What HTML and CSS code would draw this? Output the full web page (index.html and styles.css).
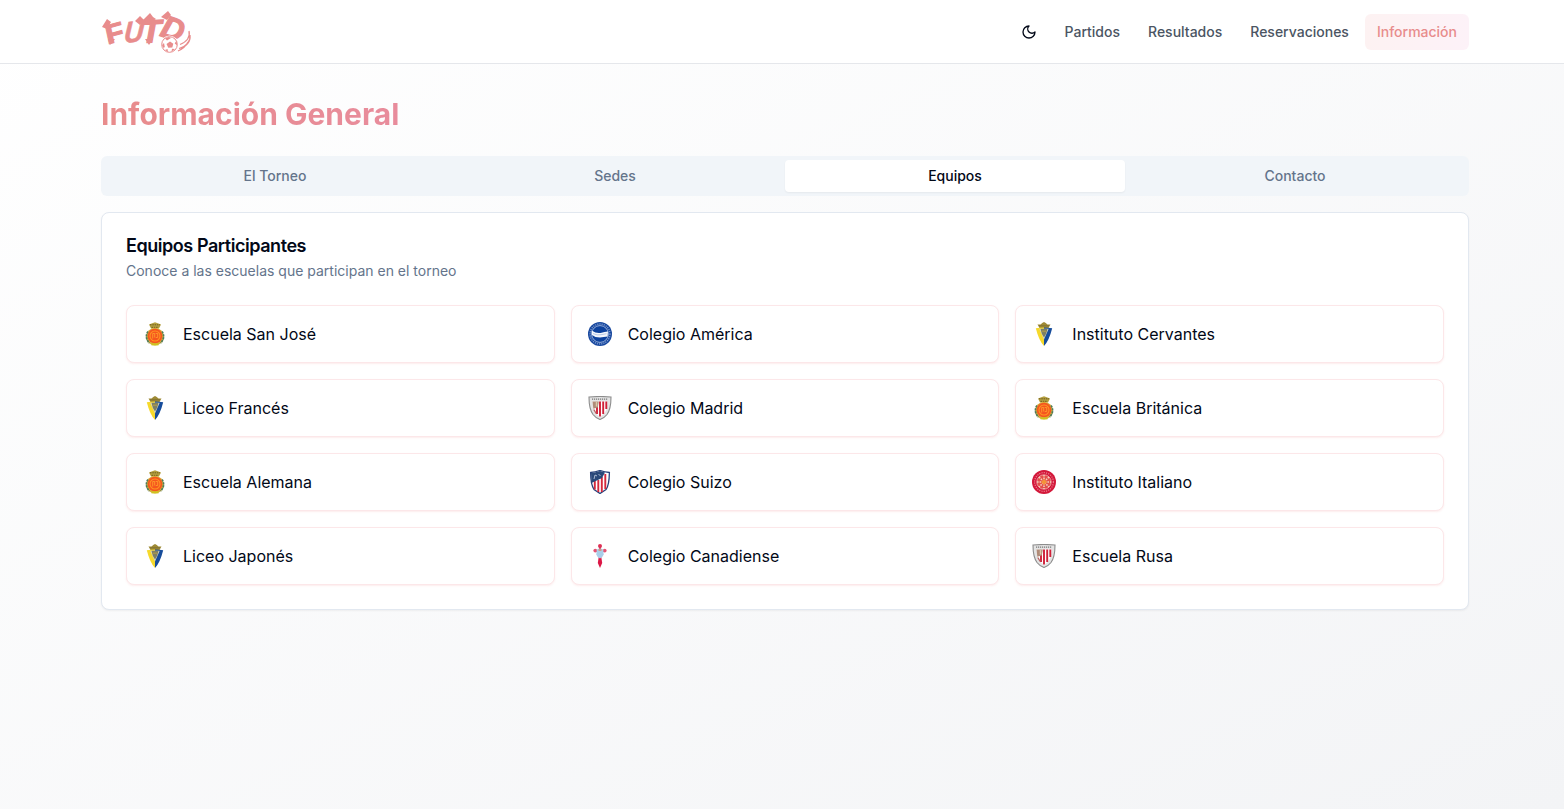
FILE: index.html
```html
<!DOCTYPE html>
<html lang="es">
<head>
<meta charset="utf-8">
<title>Información General</title>
<link rel="stylesheet" href="styles.css">
</head>
<body>
<svg class="defs" aria-hidden="true">
  <symbol id="mallorca" viewBox="0 0 24 24">
    <path d="M8 6.500 6 2.400 8.600 1.400 12 .2 15.400 1.400 18 2.400 16 6.500Z" fill="#b5a040"/>
    <path d="M7 2.800h10M8.500 5.300h7" stroke="#6d5c20" stroke-width="1" stroke-dasharray="1.500 .8"/>
    <ellipse cx="12" cy="14.600" rx="9" ry="8.800" fill="#d8ae38"/>
    <path d="M5 9.500A8.500 8.500 0 0 0 6.500 21M19 9.500A8.500 8.500 0 0 1 17.500 21" fill="none" stroke="#4f7a5a" stroke-width="1.700" stroke-dasharray="2.200 .8"/>
    <circle cx="12" cy="14" r="7.300" fill="#f5561f"/>
    <circle cx="12" cy="14" r="5" fill="none" stroke="#ff9420" stroke-width="1.100"/>
    <path d="M9.700 16.500v-5h2v4m1-4h2v4h-2" fill="none" stroke="#ffa52c" stroke-width=".8"/>
    <path d="M8.500 22.400h7" stroke="#cfc31e" stroke-width="2"/>
  </symbol>
  <symbol id="alaves" viewBox="0 0 24 24">
    <circle cx="12" cy="12" r="12" fill="#17479e"/>
    <circle cx="12" cy="12" r="10" fill="none" stroke="#7f9cd0" stroke-width="1.300" stroke-dasharray="1.200 1"/>
    <circle cx="12" cy="12" r="8.400" fill="#0d429e" stroke="#c9d6ee" stroke-width=".7"/>
    <path d="M3.600 8.500q5 3.300 9 2.400 4-1.200 7.400-1.500l-.4 5q-4 .4-7.600 1.100Q7 15.500 4 13Z" fill="#f4f7fc"/>
    <path d="M5 11.500q4 2.200 8 1.200l5.500-1" fill="none" stroke="#a9bde0" stroke-width=".8"/>
  </symbol>
  <symbol id="cadiz" viewBox="0 0 24 24">
    <path d="M7.500 6 5.500 2.600 8.500 2.600 10.200 1 12 0l1.800 1 1.700 1.600h3L16.500 6Z" fill="#9e8a35"/>
    <path d="M7.500 3.800h9" stroke="#5f5530" stroke-width=".9" stroke-dasharray="1 1"/>
    <path d="M3.800 6.300q4-.8 8.200-.8V24Q7 19 3.800 6.300Z" fill="#f6d92b"/>
    <path d="M20.200 6.300q-4-.8-8.200-.8V24q5-5 8.200-17.700Z" fill="#164c9b"/>
    <path d="M7.300 6.800h9.400L12 17.500Z" fill="#d9d9c4"/>
    <path d="M8.500 6.800h7l-1.300 5L12 15.500l-2.200-3.700Z" fill="#7d8064"/>
    <path d="M9.800 9.200h4.400" stroke="#b09b48" stroke-width="1.200"/>
  </symbol>
  <symbol id="athletic" viewBox="0 0 24 24">
    <path d="M1 1q11-1 22 0 0 12-4 17.500-3 3.800-7 5Q8 22.300 5 18.500 1 13 1 1Z" fill="#e4e4e4" stroke="#8c8c8c" stroke-width="1.100"/>
    <path d="M4 3.200h16" stroke="#777" stroke-width="1.300" stroke-dasharray="1.200 .8"/>
    <path d="M4.500 5.500h15q-.3 8.500-3.300 11.800L12 21l-4.200-3.700Q4.800 14 4.500 5.500Z" fill="#fff"/>
    <path d="M12 5.500v15M15.200 5.500v12.500M18.300 5.500v7.500M9 11v7" stroke="#cf2038" stroke-width="1.900"/>
    <path d="M4.500 5.500h6.300l-1 6-4.500 1.300Z" fill="#b08b78"/>
    <path d="M8.500 6v4.500" stroke="#d9c7a8" stroke-width="1.500"/>
    <path d="m5.800 13.500 2.400 4" stroke="#b96262" stroke-width="1.400"/>
  </symbol>
  <symbol id="atletico" viewBox="0 0 24 24">
    <path d="M2.600 2.500Q7.500 2 12 .5q4.500 1.500 9.400 2-.2 13-3.400 17L12 23.500 6 19.500Q2.700 14.500 2.600 2.500Z" fill="#fff" stroke="#26417b" stroke-width="1.300"/>
    <path d="M6.800 11v8.500M10.300 10v12M13.800 7v15M17.300 4v15" stroke="#d5293d" stroke-width="1.900"/>
    <path d="M3 3Q7.500 2.500 12 1l5 1.500-3 5.500L3.500 13Z" fill="#294879"/>
    <path d="m6 9 1-4 2 1M10.500 4l2 2" fill="none" stroke="#a9b9d2" stroke-width="1"/>
  </symbol>
  <symbol id="girona" viewBox="0 0 24 24">
    <circle cx="12" cy="12" r="12" fill="#d3183a"/>
    <circle cx="12" cy="12" r="9.400" fill="none" stroke="#e87b8e" stroke-width="1.200" stroke-dasharray="1.200 1.100"/>
    <circle cx="12" cy="12" r="7.200" fill="#e2504a" stroke="#f5c3c0" stroke-width=".7"/>
    <path d="M12 5v14M5 12h14M7 7l10 10M17 7 7 17" stroke="#f6cdbd" stroke-width="1.500" stroke-dasharray="1.600 1"/>
    <path d="M12 9 15 12 12 15 9 12Z" fill="#f49338"/>
  </symbol>
  <symbol id="celta" viewBox="0 0 24 24">
    <path d="M12 1v6M7 7h10" stroke="#de2749" stroke-width="2"/>
    <circle cx="12" cy="2" r="2" fill="#de3155"/>
    <circle cx="7.300" cy="6.600" r="1.900" fill="#e55272"/>
    <circle cx="16.700" cy="6.600" r="1.900" fill="#e55272"/>
    <path d="M10.700 13h2.600l.9 6L12 24l-2.200-5Z" fill="#dc1746"/>
    <path d="M8.800 5.500q3.200-2 6.400 0l.5 5q-1 3-3.700 4-2.700-1-3.700-4Z" fill="#a9cee9"/>
    <path d="M10.500 5h3v2h-3Z" fill="#cf9a86"/>
  </symbol>
</svg>
<header class="topbar">
  <div class="wrap topbar-inner">
    <svg class="logo" viewBox="0 0 92 48" role="img" aria-label="FUTD">
      <g class="logo-text">
        <text transform="translate(8 36) rotate(-15) skewX(10) scale(.98 .84)">F</text>
        <text class="thin" transform="translate(22.500 35) rotate(-6) skewX(-10) scale(.86 .92)">U</text>
        <text transform="translate(40 35) rotate(-3) skewX(-2) scale(1.050 1)">T</text>
        <text transform="translate(58 27.500) rotate(18) skewX(0) scale(.98 .98)">D</text>
      </g>
      <path class="logo-fill" d="m1 19 5-8 4 3-4 7ZM7 31l7 0-5 6ZM34 13l5-5 4 4-4 5ZM42 12l7-7 3 4 3 2-6 4ZM60 9l7-6 3 4-4 5ZM44 31l8 0-4 6Z"/>
      <path class="swoosh" d="M88 23q2 9-9 13.500M89 27q1 10-11 13.500M87 34q-3 6-10 9"/>
      <circle cx="68.500" cy="36.500" r="9" fill="#fff"/>
      <circle class="ball" cx="68.500" cy="36.500" r="7.800"/>
      <path class="logo-fill" d="m69 33.500 3.300 2.200-1 3.800-4 .3-1.800-3.800ZM64 30.500l4-1.500 2 1-4 2.500ZM75.500 32.500l.7 5-2.500-2ZM74 41l-3.500 2.800.5-3ZM64 42l2.500-1 .5 3ZM61 37l2-2 .8 4-1.300 1Z"/>
    </svg>
    <nav class="nav">
      <button class="theme" aria-label="Tema"><svg viewBox="0 0 24 24"><path d="M12 3a6 6 0 0 0 9 9 9 9 0 1 1-9-9Z"/></svg></button>
      <a class="link">Partidos</a>
      <a class="link">Resultados</a>
      <a class="link">Reservaciones</a>
      <a class="link current">Información</a>
    </nav>
  </div>
</header>
<main class="wrap main">
  <h1 class="title"><span>Información General</span></h1>
  <div class="tabs">
    <button class="tab">El Torneo</button>
    <button class="tab">Sedes</button>
    <button class="tab selected">Equipos</button>
    <button class="tab">Contacto</button>
  </div>
  <section class="panel">
    <h2 class="panel-title">Equipos Participantes</h2>
    <p class="panel-desc">Conoce a las escuelas que participan en el torneo</p>
    <div class="teams">
      <div class="team"><svg class="crest"><use href="#mallorca"/></svg><span>Escuela San José</span></div>
      <div class="team"><svg class="crest"><use href="#alaves"/></svg><span>Colegio América</span></div>
      <div class="team"><svg class="crest"><use href="#cadiz"/></svg><span>Instituto Cervantes</span></div>
      <div class="team"><svg class="crest"><use href="#cadiz"/></svg><span>Liceo Francés</span></div>
      <div class="team"><svg class="crest"><use href="#athletic"/></svg><span>Colegio Madrid</span></div>
      <div class="team"><svg class="crest"><use href="#mallorca"/></svg><span>Escuela Británica</span></div>
      <div class="team"><svg class="crest"><use href="#mallorca"/></svg><span>Escuela Alemana</span></div>
      <div class="team"><svg class="crest"><use href="#atletico"/></svg><span>Colegio Suizo</span></div>
      <div class="team"><svg class="crest"><use href="#girona"/></svg><span>Instituto Italiano</span></div>
      <div class="team"><svg class="crest"><use href="#cadiz"/></svg><span>Liceo Japonés</span></div>
      <div class="team"><svg class="crest"><use href="#celta"/></svg><span>Colegio Canadiense</span></div>
      <div class="team"><svg class="crest"><use href="#athletic"/></svg><span>Escuela Rusa</span></div>
    </div>
  </section>
</main>
</body>
</html>
```

FILE: styles.css
```css
*, *::before, *::after { box-sizing: border-box; }
body {
  margin: 0;
  min-height: 100vh;
  font-family: Inter, "Liberation Sans", sans-serif;
  font-size: 16px;
  line-height: 24px;
  color: #020817;
  background: linear-gradient(to bottom right, #fff, #f3f4f6);
}
h1, h2, p { margin: 0; }
button { border: 0; padding: 0; background: none; font: inherit; color: inherit; }
.defs { position: absolute; width: 0; height: 0; }
.wrap { padding-left: 101px; padding-right: 95px; }

.topbar { height: 64px; background: #fff; border-bottom: 1px solid #e5e7eb; }
.topbar-inner { height: 64px; display: flex; align-items: center; justify-content: space-between; }
.logo { width: 92px; height: 48px; display: block; overflow: visible; }
.logo-text { font: italic 900 32px "Liberation Sans", sans-serif; fill: #e88c8c; stroke: #e88c8c; stroke-width: 1.2; }
.logo-text .thin { stroke-width: .6; }
.logo-fill { fill: #e88c8c; }
.ball { fill: #fff; stroke: #e88c8c; stroke-width: 1; }
.swoosh { fill: none; stroke: #e88c8c; stroke-width: 1.3; }

.nav { display: flex; align-items: center; gap: 4px; }
.theme { width: 39px; height: 40px; display: flex; align-items: center; justify-content: center; }
.theme svg { width: 16px; height: 16px; fill: none; stroke: #020817; stroke-width: 2; stroke-linecap: round; stroke-linejoin: round; }
.link { padding: 8px 12px; border-radius: 6px; font-size: 14px; line-height: 20px; font-weight: 500; color: #4b5563; }
.current { color: #e88c8c; background: linear-gradient(to right, #fdf2f2, #fdf2f8); }

.main { padding-top: 32px; }
.title { margin-bottom: 24px; font-size: 30px; line-height: 36px; font-weight: 700; display: flex; }
.title span { background: linear-gradient(to right, #e88c8c, #e88c9c); background-clip: text; -webkit-background-clip: text; color: transparent; }
.tabs { height: 40px; padding: 4px; display: grid; grid-template-columns: repeat(4, 1fr); background: #f1f5f9; border-radius: 6px; }
.tab { border-radius: 4px; font-size: 14px; line-height: 20px; font-weight: 500; color: #64748b; }
.selected { background: #fff; color: #020817; box-shadow: 0 1px 2px rgba(0, 0, 0, .05); }

.panel { margin-top: 16px; padding: 24px; background: #fff; border: 1px solid #e2e8f0; border-radius: 8px; box-shadow: 0 1px 2px rgba(0, 0, 0, .05); }
.panel-title { font-size: 18px; line-height: 18px; font-weight: 600; letter-spacing: -.025em; }
.panel-desc { margin-top: 6px; font-size: 14px; line-height: 20px; color: #64748b; }
.teams { margin-top: 24px; display: grid; grid-template-columns: repeat(3, 1fr); gap: 16px; }
.team { height: 58px; padding: 16px; display: flex; align-items: center; gap: 16px; background: #fff; border: 1px solid #fce7e9; border-radius: 8px; box-shadow: 0 1px 2px rgba(232, 80, 80, .1); }
.crest { width: 24px; height: 24px; flex: none; }
```
